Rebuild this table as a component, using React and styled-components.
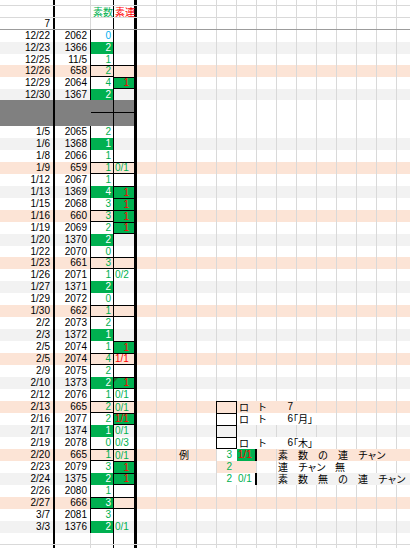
import React from 'react';
import styled, { createGlobalStyle } from 'styled-components';

const C = {
  green: '#00b050',
  red: '#ff0000',
  blue: '#00b0f0',
  peach: '#fce4d6',
  gray: '#f2f2f2',
  dark: '#808080',
  grid: '#d9d9d9',
  frozen: '#9c9c9c',
};

const BG = { white: '#fff', gray: C.gray, peach: C.peach };

const GlobalStyle = createGlobalStyle`
  html, body {
    margin: 0;
    padding: 0;
    background: #fff;
    overflow: hidden;
  }
`;

const Sheet = styled.div`
  width: 410px;
  height: 548px;
  overflow: hidden;
  display: flex;
  flex-direction: column;
`;

const Row = styled.div`
  flex: none;
  display: flex;
  box-sizing: border-box;
  height: ${({ $h }) => $h || 12}px;
  background: ${({ $bg }) => BG[$bg] || '#fff'};
  border-bottom: ${({ $line }) => ($line ? `1px solid ${$line}` : 'none')};
`;

const Cell = styled.div`
  flex: none;
  box-sizing: border-box;
  height: 100%;
  display: flex;
  align-items: center;
  white-space: nowrap;
  font-family: "Liberation Sans", "Noto Sans CJK JP", sans-serif;
  font-size: 10px;
  line-height: 1;
  color: #000;
`;

const DateCell = styled(Cell)`
  width: 55px;
  justify-content: flex-end;
  padding-right: 3px;
  border-right: 2px solid #000;
  background: ${({ $dark }) => ($dark ? C.dark : 'transparent')};
`;

const NumCell = styled(Cell)`
  width: 36px;
  justify-content: flex-end;
  padding-right: 3px;
  border-right: 1px solid ${({ $light, $dark }) => ($dark ? C.dark : $light ? C.grid : '#000')};
  background: ${({ $dark }) => ($dark ? C.dark : 'transparent')};
`;

const SosuCell = styled(Cell)`
  width: 23px;
  justify-content: ${({ $head }) => ($head ? 'flex-start' : 'flex-end')};
  padding: ${({ $head }) => ($head ? '0 0 0 2px' : '0 2px 0 0')};
  font-family: ${({ $head }) => ($head ? '"Noto Sans CJK JP", sans-serif' : '"Liberation Sans", sans-serif')};
  border-right: 1px solid #000;
  border-top: ${({ $top }) => ($top ? '1px solid #000' : 'none')};
  border-bottom: ${({ $bottom }) => ($bottom ? '1px solid #000' : 'none')};
  background: ${({ $fill, $dark }) => ($fill ? C.green : $dark ? C.dark : 'transparent')};
  color: ${({ $fill, $blue }) => ($fill ? '#fff' : $blue ? C.blue : C.green)};
`;

const RenCell = styled(Cell)`
  position: relative;
  width: 23px;
  justify-content: ${({ $left }) => ($left ? 'flex-start' : 'flex-end')};
  padding: ${({ $left }) => ($left ? '0 0 0 1px' : '0 5px 0 0')};
  font-family: ${({ $head }) => ($head ? '"Noto Sans CJK JP", sans-serif' : '"Liberation Sans", sans-serif')};
  border-right: 3px solid #000;
  border-top: ${({ $top }) => ($top ? '1px solid #000' : 'none')};
  border-bottom: ${({ $bottom }) => ($bottom ? '1px solid #000' : 'none')};
  background: ${({ $fill, $dark }) => ($fill ? C.green : $dark ? C.dark : 'transparent')};
  color: ${({ $red }) => ($red ? C.red : C.green)};

  &::before {
    content: '';
    display: ${({ $tri }) => ($tri ? 'block' : 'none')};
    position: absolute;
    left: 0;
    top: 0;
    border-top: 4px solid #1d6b2c;
    border-right: 4px solid transparent;
  }
`;

const GridCell = styled(Cell)`
  width: ${({ $w }) => $w || 20}px;
  justify-content: ${({ $right }) => ($right ? 'flex-end' : 'flex-start')};
  padding: ${({ $right, $pl }) => ($right ? '0 4px 0 0' : `0 0 0 ${$pl ?? 1}px`)};
  border-right: ${({ $edgeW }) => $edgeW || 1}px solid ${({ $edge }) => $edge || C.grid};
  border-top: ${({ $top }) => ($top ? '1px solid #000' : 'none')};
  border-bottom: ${({ $bottom }) => ($bottom ? '1px solid #000' : 'none')};
  background: ${({ $fill }) => $fill || 'transparent'};
  color: ${({ $color }) => $color || '#000'};
  font-family: ${({ $cjk }) => ($cjk ? '"Noto Sans CJK JP", sans-serif' : '"Liberation Sans", sans-serif')};
`;

const LabelSpan = styled(Cell)`
  width: ${({ $w }) => $w}px;
  padding-left: ${({ $pl }) => $pl || 0}px;
  font-family: "Noto Sans CJK JP", sans-serif;
  gap: ${({ $gap }) => $gap || 0}px;
`;

const Kana = styled.span`
  display: inline-block;
  width: ${({ $w }) => $w}px;
  padding-left: ${({ $pl }) => $pl || 0}px;
  box-sizing: border-box;
`;

const LabelNum = styled.span`
  display: inline-block;
  width: 16px;
  text-align: right;
  font-family: "Liberation Sans", sans-serif;
`;

const Bracket = styled.span`
  font-feature-settings: "palt";
`;

const Chan = styled.span`
  letter-spacing: -1px;
`;

const R = (d, n, c, opt = {}) => ({
  d,
  n,
  c,
  bg: n.startsWith('13') ? 'gray' : n.length === 3 ? 'peach' : 'white',
  ...opt,
});

// heights follow the sheet's uneven row sizes (mostly 12px)
const rows = [
  R('12/22', '2062', '0', { blue: true }),
  R('12/23', '1366', '2', { cf: true }),
  R('12/25', '11/5', '1', { h: 11 }),
  R('12/26', '658', '2'),
  R('12/29', '2064', '4', { r: '1', rf: true }),
  R('12/30', '1367', '2', { cf: true, h: 11 }),
  { dark: true, first: true, h: 13 },
  { dark: true, h: 13 },
  R('1/5', '2065', '2'),
  R('1/6', '1368', '1', { cf: true }),
  R('1/8', '2066', '1'),
  R('1/9', '659', '1', { r: '0/1' }),
  R('1/12', '2067', '1'),
  R('1/13', '1369', '4', { cf: true, r: '1', rf: true }),
  R('1/15', '2068', '3', { r: '1', rf: true }),
  R('1/16', '660', '3', { r: '1', rf: true }),
  R('1/19', '2069', '2', { r: '1', rf: true }),
  R('1/20', '1370', '2', { cf: true }),
  R('1/22', '2070', '0', { h: 11 }),
  R('1/23', '661', '3'),
  R('1/26', '2071', '1', { r: '0/2' }),
  R('1/27', '1371', '2', { cf: true }),
  R('1/29', '2072', '0'),
  R('1/30', '662', '1'),
  R('2/2', '2073', '2'),
  R('2/3', '1372', '1', { cf: true }),
  R('2/5', '2074', '1', { r: '1', rf: true }),
  R('2/5', '2074', '4', { r: '1/1', bg: 'peach' }),
  R('2/9', '2075', '2'),
  R('2/10', '1373', '2', { cf: true, r: '1', rf: true, tri: true }),
  R('2/12', '2076', '1', { r: '0/1' }),
  R('2/13', '665', '2', { r: '0/1', lg: 'l1' }),
  R('2/16', '2077', '2', { r: '1/1', rf: true, lg: 'l2' }),
  R('2/17', '1374', '1', { cf: true, r: '0/1', lg: 'l3' }),
  R('2/19', '2078', '0', { r: '0/3', lg: 'l4' }),
  R('2/20', '665', '1', { r: '0/1', lg: 'e1' }),
  R('2/23', '2079', '3', { r: '1', rf: true, lg: 'e2' }),
  R('2/24', '1375', '2', { cf: true, r: '1', rf: true, lg: 'e3' }),
  R('2/26', '2080', '1'),
  R('2/27', '666', '3', { cf: true }),
  R('3/7', '2081', '3'),
  R('3/3', '1376', '2', { cf: true, r: '0/1' }),
];

const grid = (n) => Array.from({ length: n }, (_, i) => <GridCell key={i} />);

const Words = ({ words }) =>
  words.map((w) => (w === 'チャン' ? <Chan key={w}>{w}</Chan> : <span key={w}>{w}</span>));

function RightArea({ lg }) {
  if (lg && lg[0] === 'l') {
    const day = lg === 'l2' ? '月' : '木';
    return (
      <>
        <GridCell />
        <GridCell />
        <GridCell />
        <GridCell $edge="#000" />
        <GridCell $edge="#000" $top $bottom={lg === 'l4'} />
        {lg === 'l1' && (
          <>
            <LabelSpan $w={60}>
              <Kana $w={20} $pl={2}>ロ</Kana>
              <Kana $w={20}>ト</Kana>
              <LabelNum>7</LabelNum>
            </LabelSpan>
            {grid(6)}
          </>
        )}
        {(lg === 'l2' || lg === 'l4') && (
          <>
            <LabelSpan $w={80}>
              <Kana $w={20} $pl={2}>ロ</Kana>
              <Kana $w={20}>ト</Kana>
              <LabelNum>6</LabelNum>
              <Bracket>「{day}」</Bracket>
            </LabelSpan>
            {grid(5)}
          </>
        )}
        {lg === 'l3' && grid(9)}
      </>
    );
  }
  if (lg === 'e1') {
    return (
      <>
        <GridCell />
        <GridCell />
        <GridCell $cjk $pl={2}>例</GridCell>
        <GridCell />
        <GridCell $fill="#fff" $edge="#fff" $right $color={C.green}>3</GridCell>
        <GridCell $fill={C.green} $edge="#000" $edgeW={2} $color={C.red}>1/1</GridCell>
        <GridCell />
        <LabelSpan $w={120} $pl={1} $gap={10}>
          <Words words={['素', '数', 'の', '連', 'チャン']} />
        </LabelSpan>
        {grid(1)}
      </>
    );
  }
  if (lg === 'e2') {
    return (
      <>
        {grid(4)}
        <GridCell $fill={C.peach} $edge={C.peach} $right $color={C.green}>2</GridCell>
        <GridCell $fill={C.peach} />
        <GridCell />
        <LabelSpan $w={80} $pl={1} $gap={10}>
          <Words words={['連', 'チャン', '無']} />
        </LabelSpan>
        {grid(3)}
      </>
    );
  }
  if (lg === 'e3') {
    return (
      <>
        {grid(4)}
        <GridCell $fill="#fff" $edge="#fff" $right $color={C.green}>2</GridCell>
        <GridCell $fill="#fff" $edge="#000" $edgeW={2} $color={C.green}>0/1</GridCell>
        <GridCell />
        <LabelSpan $w={140} $pl={1} $gap={10}>
          <Words words={['素', '数', '無', 'の', '連', 'チャン']} />
        </LabelSpan>
      </>
    );
  }
  return grid(14);
}

function DataRow({ row, next }) {
  if (row.dark) {
    return (
      <Row $bg="white" $h={row.h}>
        <DateCell $dark />
        <NumCell $dark />
        <SosuCell $dark $bottom={row.first} />
        <RenCell $dark $bottom={row.first} />
        <RightArea />
      </Row>
    );
  }
  const peach = row.bg === 'peach';
  const boxed = peach || row.rf;
  const nextBoxed = next && !next.dark && (next.bg === 'peach' || next.rf);
  const str = row.r && row.r.includes('/');
  return (
    <Row $bg={row.bg} $h={row.h}>
      <DateCell>{row.d}</DateCell>
      <NumCell>{row.n}</NumCell>
      <SosuCell $fill={row.cf} $blue={row.blue} $top={peach} $bottom={peach}>
        {row.c}
      </SosuCell>
      <RenCell
        $fill={row.rf}
        $left={str}
        $red={row.r && row.r[0] === '1'}
        $top={boxed}
        $bottom={boxed && !nextBoxed}
        $tri={row.tri}
      >
        {row.r}
      </RenCell>
      <RightArea lg={row.lg} />
    </Row>
  );
}

export default function App() {
  return (
    <>
      <GlobalStyle />
      <Sheet>
        <Row $h={6} $line={C.grid}>
          <DateCell />
          <NumCell $light />
          <SosuCell />
          <RenCell />
          <RightArea />
        </Row>
        <Row $h={12} $line={C.grid}>
          <DateCell />
          <NumCell $light />
          <SosuCell $head>素数</SosuCell>
          <RenCell $head $left $red>素連</RenCell>
          <RightArea />
        </Row>
        <Row $h={12} $line={C.frozen}>
          <DateCell>7</DateCell>
          <NumCell $light />
          <SosuCell />
          <RenCell />
          <RightArea />
        </Row>
        {rows.map((row, i) => (
          <DataRow key={i} row={row} next={rows[i + 1]} />
        ))}
        <Row $h={12} $line={C.grid}>
          <DateCell />
          <NumCell $light />
          <SosuCell />
          <RenCell />
          <RightArea />
        </Row>
        <Row $h={12}>
          <DateCell />
          <NumCell $light />
          <SosuCell />
          <RenCell />
          <RightArea />
        </Row>
      </Sheet>
    </>
  );
}
